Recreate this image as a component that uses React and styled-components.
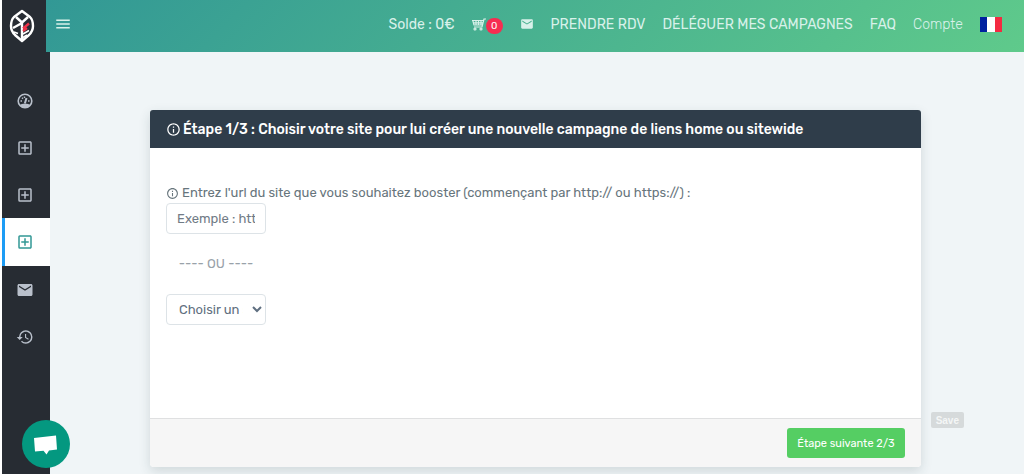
import { useState } from "react";
import styled, { createGlobalStyle } from "styled-components";
import { MdMenu, MdEmail, MdInfoOutline, MdHistory, MdOutlineAddBox } from "react-icons/md";

const GlobalStyle = createGlobalStyle`
  * {
    box-sizing: border-box;
  }
  body {
    margin: 0;
    background: #f0f5f7;
    color: #67757c;
    font-family: Rubik, Roboto, "Open Sans", sans-serif;
    font-size: 13px;
  }
  button, input, select {
    font-family: inherit;
  }
`;

const Page = styled.div`
  display: grid;
  grid-template-columns: 44px minmax(0, 1fr);
  grid-template-rows: 52px 1fr;
  min-height: 100vh;
  border-left: 2px solid #fff;
`;

const Brand = styled.a`
  display: flex;
  align-items: center;
  justify-content: center;
  padding-right: 4px;
  background: #272c33;
`;

const TopBar = styled.header`
  display: flex;
  align-items: center;
  justify-content: space-between;
  padding: 0 22px 4px 8px;
  background: linear-gradient(135deg, #329895 0%, #5fca8b 100%);
`;

const IconButton = styled.button`
  display: flex;
  padding: 0;
  border: 0;
  background: none;
  color: #d9f1ea;
  font-size: 18px;
  cursor: pointer;
`;

const TopNav = styled.nav`
  display: flex;
  align-items: center;
  gap: 17px;
`;

const TopLink = styled.a`
  display: flex;
  align-items: center;
  color: #d9f1ea;
  font-size: 14px;
  font-weight: ${(props) => (props.$light ? 300 : 400)};
  line-height: 23px;
  text-decoration: none;
  white-space: nowrap;
`;

const CartCount = styled.span`
  min-width: 17px;
  margin-top: 3px;
  padding: 0 4px;
  border-radius: 8px;
  background: #f62d51;
  color: #fff;
  font-size: 10px;
  line-height: 16px;
  text-align: center;
`;

const SideBar = styled.aside`
  width: 48px;
  padding-top: 25px;
  background: #272c33;
`;

const SideLink = styled.a`
  display: flex;
  align-items: center;
  justify-content: center;
  height: ${(props) => (props.$active ? 48 : 47)}px;
  padding-right: 2px;
  color: ${(props) => (props.$active ? "#329895" : "#b9c0cb")};
  background: ${(props) => (props.$active ? "#fff" : "transparent")};
  box-shadow: ${(props) => (props.$active ? "inset 3px 0 0 #1c9cf5" : "none")};
  font-size: 18px;
`;

const Content = styled.main`
  display: flex;
  align-items: flex-end;
  align-self: start;
  gap: 10px;
  padding: 58px 60px 7px 104px;
`;

const Card = styled.form`
  flex: 1;
  min-width: 0;
  border-radius: 4px;
  background: #fff;
  box-shadow: 0 4px 12px rgba(40, 60, 70, 0.16);
`;

const CardHeader = styled.h4`
  display: flex;
  align-items: center;
  gap: 2px;
  margin: 0;
  padding: 9px 16px 8px;
  border-radius: 3px 3px 0 0;
  background: #2f3d4a;
  color: #fff;
  font-size: 14px;
  font-weight: 500;
  line-height: 21px;

  svg {
    font-size: 15px;
  }
`;

const CardBody = styled.div`
  display: flex;
  flex-direction: column;
  align-items: flex-start;
  min-height: 270px;
  padding: 35px 16px;
`;

const FieldLabel = styled.label`
  display: flex;
  align-items: center;
  gap: 3px;
  line-height: 20px;
`;

const TextField = styled.input`
  width: 100px;
  height: 31px;
  padding: 0 10px;
  border: 1px solid #dde3e7;
  border-radius: 4px;
  color: #67757c;
  font-size: 13px;
  &::placeholder {
    color: #717b86;
  }
`;

const Separator = styled.p`
  width: 100px;
  margin: 20px 0;
  color: #99a2a9;
  line-height: 20px;
  text-align: center;
`;

const SelectField = styled.select`
  width: 100px;
  height: 31px;
  padding: 0 6px 0 8px;
  border: 1px solid #dde3e7;
  border-radius: 4px;
  background: #fff;
  color: #5f6f80;
  font-size: 13px;
`;

const CardFooter = styled.div`
  display: flex;
  justify-content: flex-end;
  padding: 9px 16px;
  border-top: 1px solid #dfe0e1;
  border-radius: 0 0 4px 4px;
  background: #f6f6f6;
`;

const NextButton = styled.button`
  height: 30px;
  padding: 0 10px;
  border: 0;
  border-radius: 3px;
  background: #55ce63;
  color: #fff;
  font-size: 11px;
  font-weight: 400;
`;

const SaveButton = styled.button`
  height: 16px;
  margin-bottom: 39px;
  padding: 0 5px;
  border: 0;
  border-radius: 2px;
  background: #d6dadb;
  color: #f4f6f6;
  font-family: "Liberation Sans", Arial, sans-serif;
  font-size: 10px;
  font-weight: 700;
`;

const ChatButton = styled.button`
  position: fixed;
  left: 22px;
  bottom: 6px;
  width: 48px;
  height: 48px;
  padding: 0;
  border: 0;
  border-radius: 50%;
  background: #049880;
  cursor: pointer;
`;

function Logo() {
  return (
    <svg width="26" height="34" viewBox="0 0 26 34" fill="none" stroke="#fff" strokeWidth="2.4" strokeLinejoin="round">
      <path d="M13 2L21 8Q24 11 24 17Q24 22 20 26L13 32L6 26Q2 22 2 17Q2 11 5 8Z" />
      <path d="M7 8L13 13.500L19 8M13 13.500V31M13 14L4 19" />
      <path d="M5 23L9 24.500M14 25L20 21.500M14 28.500L18 26" strokeWidth="1.600" />
      <path d="M14 19.500L20 14.500M14 22L18 19" stroke="#ef3348" />
    </svg>
  );
}

function Gauge() {
  return (
    <svg width="16" height="16" viewBox="0 0 16 16" fill="none" stroke="currentColor" strokeWidth="1.6">
      <circle cx="8" cy="8" r="6.8" />
      <path d="M2.500 12C5 10.200 11 10.200 13.500 12L11 14.500H5Z" fill="currentColor" stroke="none" />
      <path d="M7.800 10.500L9.500 5" strokeWidth="2" />
      <path d="M3.500 8H5M5 4.800L6 5.800M11 8H12.500M7.500 3.500V5" strokeWidth="1.400" />
    </svg>
  );
}

function Cart() {
  return (
    <svg width="14" height="13" viewBox="0 0 14 13" fill="none" stroke="currentColor" strokeWidth="1.2">
      <path d="M14 1H12L10 9H2M0 2.500H11.500M1 4.800H11M1.500 7H10.500M0.800 2.500L2 7M4 2.500V7M6.500 2.500V7M9 2.500V7" />
      <circle cx="3" cy="11" r="1" />
      <circle cx="9" cy="11" r="1" />
    </svg>
  );
}

function Flag() {
  return (
    <svg width="22" height="15" viewBox="0 0 22 15">
      <path d="M0 0H22V15H0Z" fill="#fff" />
      <path d="M0 0H7V15H0Z" fill="#00209f" />
      <path d="M15 0H22V15H15Z" fill="#f42a41" />
    </svg>
  );
}

const sideLinks = [
  { name: "Tableau de bord", icon: <Gauge /> },
  { name: "Nouvelle campagne", icon: <MdOutlineAddBox /> },
  { name: "Nouvelle campagne articles", icon: <MdOutlineAddBox /> },
  { name: "Nouvelle campagne home", icon: <MdOutlineAddBox />, active: true },
  { name: "Messages", icon: <MdEmail /> },
  { name: "Historique", icon: <MdHistory /> },
];

function App() {
  const [url, setUrl] = useState("");

  return (
    <>
      <GlobalStyle />
      <Page>
        <Brand href="#" aria-label="Accueil">
          <Logo />
        </Brand>
        <TopBar>
          <IconButton type="button" aria-label="Menu">
            <MdMenu />
          </IconButton>
          <TopNav>
            <TopLink href="#">Solde : 0€</TopLink>
            <TopLink href="#" aria-label="Panier">
              <Cart />
              <CartCount>0</CartCount>
            </TopLink>
            <TopLink href="#" aria-label="Messages">
              <MdEmail />
            </TopLink>
            <TopLink href="#">PRENDRE RDV</TopLink>
            <TopLink href="#">DÉLÉGUER MES CAMPAGNES</TopLink>
            <TopLink href="#">FAQ</TopLink>
            <TopLink href="#" $light>Compte</TopLink>
            <TopLink href="#" aria-label="Français">
              <Flag />
            </TopLink>
          </TopNav>
        </TopBar>
        <SideBar>
          {sideLinks.map((link) => (
            <SideLink key={link.name} href="#" aria-label={link.name} $active={link.active}>
              {link.icon}
            </SideLink>
          ))}
        </SideBar>
        <Content>
          <Card onSubmit={(e) => e.preventDefault()}>
            <CardHeader>
              <MdInfoOutline />
              Étape 1/3 : Choisir votre site pour lui créer une nouvelle campagne de liens home ou sitewide
            </CardHeader>
            <CardBody>
              <FieldLabel htmlFor="url">
                <MdInfoOutline />
                Entrez l'url du site que vous souhaitez booster (commençant par http:// ou https://) :
              </FieldLabel>
              <TextField
                id="url"
                type="text"
                placeholder="Exemple : https://www.site.fr"
                value={url}
                onChange={(e) => setUrl(e.target.value)}
              />
              <Separator>---- OU ----</Separator>
              <SelectField aria-label="Choisir un site">
                <option>Choisir un site</option>
              </SelectField>
            </CardBody>
            <CardFooter>
              <NextButton type="submit">Étape suivante 2/3</NextButton>
            </CardFooter>
          </Card>
          <SaveButton type="button">Save</SaveButton>
        </Content>
      </Page>
      <ChatButton type="button" aria-label="Chat">
        <svg width="48" height="48" viewBox="0 0 48 48">
          <path d="M12 18L34 15.500L35 29.500L27 30.500L24.500 34.500L21.500 30.800L13 31.500Z" fill="#fff" />
        </svg>
      </ChatButton>
    </>
  );
}

export default App;
